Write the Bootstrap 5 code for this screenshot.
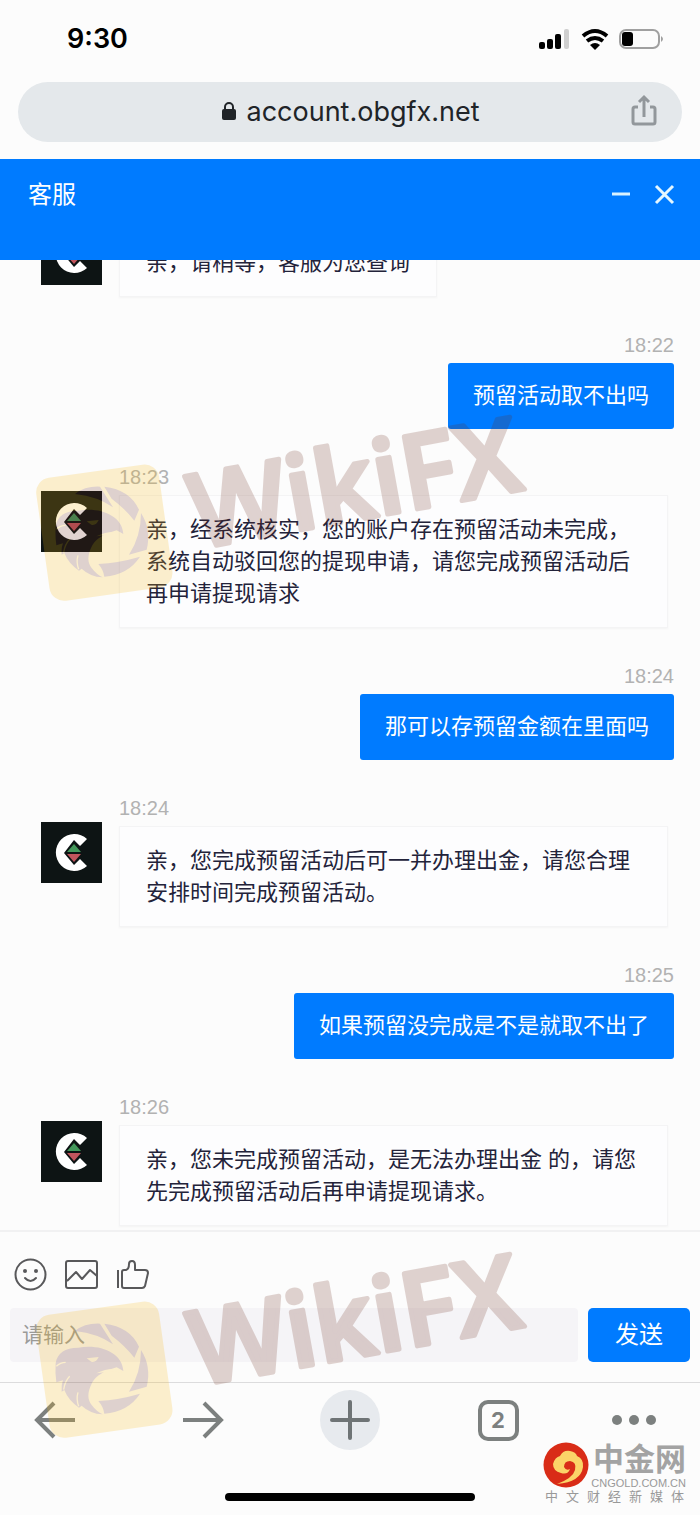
<!DOCTYPE html>
<html lang="zh-CN">
<head>
<meta charset="utf-8">
<meta name="viewport" content="width=device-width, initial-scale=1">
<title>客服</title>
<link href="https://cdn.jsdelivr.net/npm/bootstrap@5.3.0/dist/css/bootstrap.min.css" rel="stylesheet">
<style>
  body { background: #fcfcfc; font-family: "Liberation Sans", "Noto Sans CJK SC", sans-serif; color: #23233a; }
  svg { display: block; flex: none; }
  .screen { height: 100vh; }
  .clock { font: 600 27px/34px Inter, sans-serif; color: #000; }
  .status { padding: 22px 36px 26px 67px; }
  .address { height: 60px; margin: 0 18px 17px; background: #e4e8eb; color: #202428; font: 400 27px/34px Inter, sans-serif; }
  .address a { color: inherit; }
  .share { right: 24px; top: 12px; }
  .brand-blue { background: #007bff; color: #fff; }
  .brand-blue:hover { background: #006fe6; color: #fff; }
  .chat-head { height: 101px; padding: 18px 24px 0 28px; }
  .chat-head h1 { font-size: 24px; line-height: 36px; font-weight: 400; }
  .chat { min-height: 0; padding: 0 26px 4px 41px; }
  .message { flex: none; margin-top: 36px; }
  .stamp { font-size: 20px; line-height: 24px; margin-bottom: 6px; color: #b2b2b2; }
  .incoming .stamp { margin-left: 78px; }
  .face { width: 61px; height: 61px; margin: -4px 17px 0 0; }
  .bubble { font-size: 22px; line-height: 32px; }
  .incoming .bubble { padding: 18px 26px 17px; margin-right: 6px; background: #fdfdfe; border: 1px solid #f4f4f5; box-shadow: 0 1px 2px #f4f4f4; }
  .outgoing .bubble { padding: 17px 25px; border-radius: 3px; }
  .composer { border-top: 2px solid #f1f1f2; padding: 26px 10px 20px; }
  .tools { gap: 18px; padding-left: 4px; margin-bottom: 17px; }
  .entry-row { gap: 10px; }
  .entry { height: 54px; background: #f5f4f7; border: 0; border-radius: 4px; padding: 0 12px; font-size: 21px; min-width: 0; }
  .entry::placeholder { color: #9a9a98; }
  .send { width: 102px; height: 54px; border: 0; border-radius: 5px; font-size: 24px; }
  .browser-bar { border-top: 1px solid #dcdcdd; height: 133px; padding: 7px 25px 0; }
  .home-line { width: 250px; height: 8px; bottom: 14px; background: #000; }
  .overlay { pointer-events: none; width: 560px; opacity: .2; left: 0; }
  .overlay.upper { top: 383px; }
  .overlay.lower { bottom: 55px; }
  .wiki-word { font-family: "Open Sans", sans-serif; font-weight: 600; font-size: 310px; }
  .source { right: 14px; bottom: 11px; width: 143px; color: #999; pointer-events: none; }
  .source-name { font-size: 31px; line-height: 35px; font-weight: 700; color: #a3a3a3; }
  .source-site { font-size: 11px; line-height: 12px; }
  .source-line { font-size: 13px; line-height: 15px; text-align-last: justify; padding: 0 2px; }
</style>
</head>
<body>
<svg width="0" height="0" class="position-absolute" aria-hidden="true">
  <symbol id="avatar" viewBox="0 0 61 61">
    <path fill="#0d1414" d="M0 0h61v61H0z"/>
    <path fill="#fff" d="M46 17A18.500 18.500 0 1 0 46 44L39 37 33 43 23 31 33 18 39 24z"/>
    <path fill="#43985b" d="M33 22l7 8H26z"/>
    <path fill="#c2555d" d="M26 32h14l-7 8z"/>
  </symbol>
  <symbol id="wiki" viewBox="0 0 1680 720">
    <rect x="127" y="263" width="372" height="372" rx="44" fill="#f8b810" transform="rotate(-8 313 449)"/>
    <g transform="translate(105 225)">
      <g fill="#6c2b1c">
        <path d="M120 108Q150 84 195 86L234 148Q190 116 120 108zM208 86Q285 95 312 155L298 188Q270 152 230 122z"/>
        <path d="M318 165Q350 215 335 275L282 290Q318 235 318 165zM190 318Q250 315 315 296 280 350 208 356 205 335 190 318z"/>
        <path d="M62 205C66 175 90 158 130 158C190 146 262 170 265 228L245 217C205 228 185 242 172 262C155 295 158 315 170 330Q185 350 203 358Q165 356 140 332L132 338Q100 316 88 285L80 290Q78 270 84 256L64 262Q60 232 62 205z"/>
      </g>
      <path fill="#f8b810" d="M155 190l36-4q-8 18-22 14zM184 235q40-20 74-10l4 8q-34-6-78 2z"/>
      <path fill="none" stroke="#f8b810" stroke-width="4" d="M64 214q12-12 28-12M86 284q4-26 18-40M131 334q-8-22-2-42"/>
    </g>
    <text class="wiki-word" x="590" y="498" fill="#6c2b1c" stroke="#6c2b1c" stroke-width="14" stroke-linejoin="round" transform="rotate(-10.300 590 498)">WikiFX</text>
  </symbol>
</svg>

<div class="screen position-relative d-flex flex-column overflow-hidden">
  <div class="status d-flex align-items-center justify-content-between flex-shrink-0">
    <span class="clock">9:30</span>
    <svg width="126" height="24" viewBox="0 0 126 24" aria-label="信号、无线网络、电量">
      <rect x="1" y="15" width="6" height="7" rx="2"/><rect x="9" y="12" width="6" height="10" rx="2"/><rect x="17" y="7" width="6" height="15" rx="2"/><rect x="26" y="2" width="5" height="20" rx="2" fill="#cfcfcf"/>
      <g fill="none" stroke="#000" stroke-width="4"><path d="M45 9q12-10 24 0M49 14q8-6 16 0"/></g><path d="M52 18q5-4 10 0l-5 5z"/>
      <rect x="82" y="3" width="39" height="18" rx="6" fill="none" stroke="#a0a0a0" stroke-width="2"/><rect x="84" y="5" width="11" height="14" rx="3"/><path d="M123 9q4 3 0 6z" fill="#a0a0a0"/>
    </svg>
  </div>

  <div class="address position-relative rounded-pill d-flex align-items-center justify-content-center gap-2 flex-shrink-0">
    <svg width="18" height="22" viewBox="0 0 18 22"><rect x="2" y="8" width="14" height="11" rx="2" fill="#202428"/><path d="M5 9V6a4 4 0 0 1 8 0v3" fill="none" stroke="#202428" stroke-width="2"/></svg>
    <a href="#" class="text-decoration-none">account.obgfx.net</a>
    <button type="button" class="share btn p-0 border-0 position-absolute" aria-label="分享">
      <svg width="28" height="34" viewBox="0 0 28 34" fill="none" stroke="#92979b" stroke-width="3"><path d="M8 13H5q-2 0-2 2v13q0 2 2 2h18q2 0 2-2V15q0-2-2-2h-3M14 23V4M9 8l5-5 5 5"/></svg>
    </button>
  </div>

  <header class="chat-head brand-blue d-flex align-items-start justify-content-between flex-shrink-0">
    <h1 class="m-0">客服</h1>
    <div class="d-flex gap-3 pt-1">
      <button type="button" class="btn p-0 border-0" aria-label="最小化"><svg width="28" height="28" viewBox="0 0 28 28" stroke="#d9f2ff" stroke-width="3"><path d="M4 13h18"/></svg></button>
      <button type="button" class="btn p-0 border-0" aria-label="关闭"><svg width="24" height="28" viewBox="0 0 24 28" stroke="#e4f7ff" stroke-width="3"><path d="M4 5l17 17M21 5L4 22"/></svg></button>
    </div>
  </header>

  <main class="chat flex-fill d-flex flex-column justify-content-end overflow-hidden">
    <article class="message incoming">
      <div class="d-flex align-items-start"><svg class="face"><use href="#avatar"/></svg><div class="bubble">亲，请稍等，客服为您查询</div></div>
    </article>
    <article class="message outgoing d-flex flex-column align-items-end">
      <div class="stamp">18:22</div>
      <div class="bubble brand-blue">预留活动取不出吗</div>
    </article>
    <article class="message incoming">
      <div class="stamp">18:23</div>
      <div class="d-flex align-items-start"><svg class="face"><use href="#avatar"/></svg><div class="bubble">亲，经系统核实，您的账户存在预留活动未完成，系统自动驳回您的提现申请，请您完成预留活动后再申请提现请求</div></div>
    </article>
    <article class="message outgoing d-flex flex-column align-items-end">
      <div class="stamp">18:24</div>
      <div class="bubble brand-blue">那可以存预留金额在里面吗</div>
    </article>
    <article class="message incoming">
      <div class="stamp">18:24</div>
      <div class="d-flex align-items-start"><svg class="face"><use href="#avatar"/></svg><div class="bubble">亲，您完成预留活动后可一并办理出金，请您合理安排时间完成预留活动。</div></div>
    </article>
    <article class="message outgoing d-flex flex-column align-items-end">
      <div class="stamp">18:25</div>
      <div class="bubble brand-blue">如果预留没完成是不是就取不出了</div>
    </article>
    <article class="message incoming">
      <div class="stamp">18:26</div>
      <div class="d-flex align-items-start"><svg class="face"><use href="#avatar"/></svg><div class="bubble">亲，您未完成预留活动，是无法办理出金 的，请您先完成预留活动后再申请提现请求。</div></div>
    </article>
  </main>

  <form class="composer flex-shrink-0">
    <div class="tools d-flex">
      <button type="button" class="btn p-0 border-0" aria-label="表情"><svg width="33" height="33" viewBox="0 0 33 33" fill="none" stroke="#58585a" stroke-width="2"><circle cx="16.500" cy="16.500" r="15"/><path d="M11 20q5.500 6 11 0" stroke-linecap="round"/><g fill="#58585a" stroke="none"><circle cx="11" cy="13" r="2"/><circle cx="22" cy="13" r="2"/></g></svg></button>
      <button type="button" class="btn p-0 border-0" aria-label="图片"><svg width="33" height="33" viewBox="0 0 33 33" fill="none" stroke="#58585a" stroke-width="2" stroke-linejoin="round"><rect x="1" y="3" width="31" height="27" rx="2"/><path d="M2 23l9-9 6 7 8-9 7 6"/></svg></button>
      <button type="button" class="btn p-0 border-0" aria-label="点赞"><svg width="33" height="33" viewBox="0 0 33 33" fill="none" stroke="#58585a" stroke-width="2" stroke-linejoin="round"><path d="M2 12v18M6 28V14q0-2 2-2h2q3-1 3-6 0-3 3-3t3 4v5h10q3 0 3 3l-3 13q-1 2-3 2H8q-2 0-2-2z"/></svg></button>
    </div>
    <div class="entry-row d-flex">
      <input class="entry flex-fill" type="text" placeholder="请输入" aria-label="请输入">
      <button class="send btn p-0 brand-blue" type="button">发送</button>
    </div>
  </form>

  <nav class="browser-bar position-relative d-flex justify-content-between align-items-start flex-shrink-0">
    <button type="button" class="btn p-0 border-0" aria-label="后退"><svg width="60" height="60" viewBox="0 0 60 60" fill="none" stroke="#7c807f" stroke-width="4"><path d="M50 30H13M29 13L12 30l17 17"/></svg></button>
    <button type="button" class="btn p-0 border-0" aria-label="前进"><svg width="60" height="60" viewBox="0 0 60 60" fill="none" stroke="#7c807f" stroke-width="4"><path d="M10 30h37M31 13l17 17-17 17"/></svg></button>
    <button type="button" class="btn p-0 border-0" aria-label="新标签页"><svg width="60" height="60" viewBox="0 0 60 60"><circle cx="30" cy="30" r="30" fill="#e7eaee"/><path d="M12 30h36M30 12v36" stroke="#6f7476" stroke-width="4" stroke-linecap="round"/></svg></button>
    <button type="button" class="btn p-0 border-0" aria-label="2 个标签页"><svg width="60" height="60" viewBox="0 0 60 60"><rect x="12" y="12" width="37" height="37" rx="8" fill="none" stroke="#7c807f" stroke-width="4"/><text x="30" y="38" text-anchor="middle" font-family="Inter, sans-serif" font-size="22" font-weight="700" fill="#7c807f">2</text></svg></button>
    <button type="button" class="btn p-0 border-0" aria-label="更多"><svg class="overflow-visible" width="60" height="60" viewBox="0 0 60 60" fill="#7c807f"><circle cx="2" cy="30" r="5"/><circle cx="19" cy="30" r="5"/><circle cx="36" cy="30" r="5"/></svg></button>
    <div class="home-line rounded-pill position-absolute start-50 translate-middle-x"></div>
  </nav>

  <svg class="overlay upper position-absolute" height="240" aria-hidden="true"><use href="#wiki"/></svg>
  <svg class="overlay lower position-absolute" height="240" aria-hidden="true"><use href="#wiki"/></svg>

  <aside class="source position-absolute">
    <div class="d-flex justify-content-between align-items-start">
      <svg width="46" height="46" viewBox="0 0 46 46"><circle cx="23" cy="23" r="22.500" fill="#d92c17"/><path fill="#fbd468" d="M14 42Q30 36 32 28 34 20 27 19 21 19 21 25 23 29 27 27 25 33 18 31 10 29 10 22 12 15 17 14 20 8 27 9 33 10 34 14 41 17 40 25 38 40 14 42z"/></svg>
      <div class="text-end">
        <div class="source-name">中金网</div>
        <div class="source-site">CNGOLD.COM.CN</div>
      </div>
    </div>
    <div class="source-line">中 文 财 经 新 媒 体</div>
  </aside>
</div>
<script src="https://cdn.jsdelivr.net/npm/bootstrap@5.3.0/dist/js/bootstrap.bundle.min.js"></script>
</body>
</html>
